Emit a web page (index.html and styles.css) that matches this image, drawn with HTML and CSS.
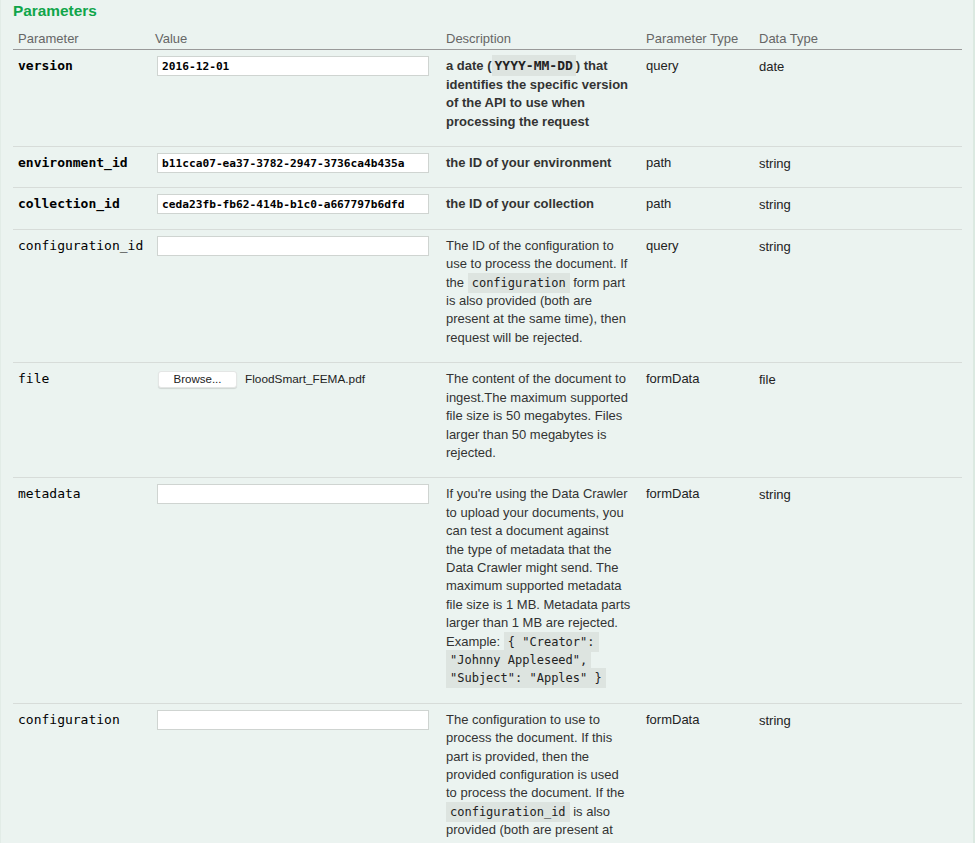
FILE: index.html
```html
<!DOCTYPE html>
<html lang="en">
<head>
<meta charset="utf-8">
<title>Parameters</title>
<link rel="stylesheet" href="styles.css">
</head>
<body>
<div class="panel">
  <h4 class="title">Parameters</h4>
  <table class="params">
    <colgroup>
      <col class="c-name">
      <col class="c-value">
      <col class="c-desc">
      <col class="c-ptype">
      <col class="c-dtype">
    </colgroup>
    <thead>
      <tr>
        <th class="name">Parameter</th>
        <th>Value</th>
        <th>Description</th>
        <th>Parameter Type</th>
        <th>Data Type</th>
      </tr>
    </thead>
    <tbody>
      <tr>
        <td class="name req">version</td>
        <td class="value"><input class="field" type="text" value="2016-12-01"></td>
        <td class="desc strong">a date (<code>YYYY-MM-DD</code>) that<br>identifies the specific version<br>of the API to use when<br>processing the request</td>
        <td class="ptype">query</td>
        <td class="dtype">date</td>
      </tr>
      <tr>
        <td class="name req">environment_id</td>
        <td class="value"><input class="field" type="text" value="b11cca07-ea37-3782-2947-3736ca4b435a"></td>
        <td class="desc strong">the ID of your environment</td>
        <td class="ptype">path</td>
        <td class="dtype">string</td>
      </tr>
      <tr>
        <td class="name req">collection_id</td>
        <td class="value"><input class="field" type="text" value="ceda23fb-fb62-414b-b1c0-a667797b6dfd"></td>
        <td class="desc strong">the ID of your collection</td>
        <td class="ptype">path</td>
        <td class="dtype">string</td>
      </tr>
      <tr>
        <td class="name">configuration_id</td>
        <td class="value"><input class="field" type="text" value=""></td>
        <td class="desc">The ID of the configuration to<br>use to process the document. If<br>the <code>configuration</code> form part<br>is also provided (both are<br>present at the same time), then<br>request will be rejected.</td>
        <td class="ptype">query</td>
        <td class="dtype">string</td>
      </tr>
      <tr>
        <td class="name">file</td>
        <td class="value">
          <div class="filepick">
            <button class="browse" type="button">Browse...</button>
            <span class="filename">FloodSmart_FEMA.pdf</span>
          </div>
        </td>
        <td class="desc">The content of the document to<br>ingest.The maximum supported<br>file size is 50 megabytes. Files<br>larger than 50 megabytes is<br>rejected.</td>
        <td class="ptype">formData</td>
        <td class="dtype">file</td>
      </tr>
      <tr>
        <td class="name">metadata</td>
        <td class="value"><input class="field" type="text" value=""></td>
        <td class="desc">If you're using the Data Crawler<br>to upload your documents, you<br>can test a document against<br>the type of metadata that the<br>Data Crawler might send. The<br>maximum supported metadata<br>file size is 1 MB. Metadata parts<br>larger than 1 MB are rejected.<br>Example: <code>{ "Creator":<br>"Johnny Appleseed",<br>"Subject": "Apples" }</code></td>
        <td class="ptype">formData</td>
        <td class="dtype">string</td>
      </tr>
      <tr>
        <td class="name">configuration</td>
        <td class="value"><input class="field" type="text" value=""></td>
        <td class="desc">The configuration to use to<br>process the document. If this<br>part is provided, then the<br>provided configuration is used<br>to process the document. If the<br><code>configuration_id</code> is also<br>provided (both are present at</td>
        <td class="ptype">formData</td>
        <td class="dtype">string</td>
      </tr>
    </tbody>
  </table>
</div>
</body>
</html>
```
FILE: styles.css
```css
* {
  box-sizing: border-box;
}

html,
body {
  margin: 0;
  padding: 0;
}

body {
  background: #ebf3f0;
  font-family: "Liberation Sans", Arial, Helvetica, sans-serif;
  font-size: 13px;
  color: #333;
  height: 843px;
  overflow: hidden;
}

.panel {
  min-height: 843px;
  border-left: 1px solid #e2ece7;
  border-right: 2px solid #dbe9e1;
  padding: 2px 0 0 12px;
}

.title {
  margin: 0;
  font-size: 15.4px;
  line-height: 18px;
  font-weight: bold;
  color: #10a54a;
}

.params {
  width: 949px;
  border-collapse: collapse;
  table-layout: fixed;
}

.c-name { width: 142px; }
.c-value { width: 291px; }
.c-desc { width: 200px; }
.c-ptype { width: 113px; }
.c-dtype { width: 203px; }

.params th {
  text-align: left;
  font-weight: normal;
  color: #666;
  padding: 10px 0 1px 0;
  line-height: 18.4px;
  border-bottom: 1px solid #999;
}

.params td {
  vertical-align: top;
  padding: 7px 0 15px 0;
  line-height: 18.4px;
  border-bottom: 1px solid #d7dcd9;
  color: #222;
}

.params td.value {
  padding: 6px 0 5px 0;
}

.params .name {
  padding-left: 5px;
}

.params td.name {
  font-family: "DejaVu Sans Mono", "Liberation Mono", monospace;
  font-size: 13px;
  color: #000;
}

.params td.req {
  font-weight: bold;
}

.field {
  display: block;
  width: 272px;
  height: 20px;
  margin: 0 0 0 2px;
  padding: 0 4px;
  border: 1px solid #cfd4d1;
  background: #fff;
  font-family: "DejaVu Sans Mono", "Liberation Mono", monospace;
  font-size: 11.2px;
  font-weight: bold;
  color: #000;
  outline: none;
}

.filepick {
  display: flex;
  align-items: center;
  gap: 8px;
  height: 18.4px;
  margin-top: 1px;
}

.browse {
  margin: 0 0 0 3px;
  width: 79px;
  height: 17px;
  padding: 0;
  background: #fff;
  border: 1px solid #e4e6e5;
  border-radius: 3px;
  box-shadow: 0 1px 1px rgba(0, 0, 0, 0.12);
  font-family: "Liberation Sans", Arial, sans-serif;
  font-size: 11.5px;
  color: #222;
}

.filename {
  font-size: 11.8px;
  color: #222;
}

.params td.desc {
  white-space: nowrap;
  color: #333;
}

.params td.strong {
  font-weight: bold;
}

.desc code {
  font-family: "DejaVu Sans Mono", "Liberation Mono", monospace;
  font-size: 12px;
  background: #dde4e0;
  padding: 3px 4px;
  -webkit-box-decoration-break: clone;
  box-decoration-break: clone;
  color: #222;
}

.desc.strong code {
  font-size: 13px;
  padding: 3px 3px;
}

.params td.ptype {
  color: #222;
}

.params td.dtype {
  padding-top: 8px;
  padding-bottom: 14px;
  color: #222;
}
```
